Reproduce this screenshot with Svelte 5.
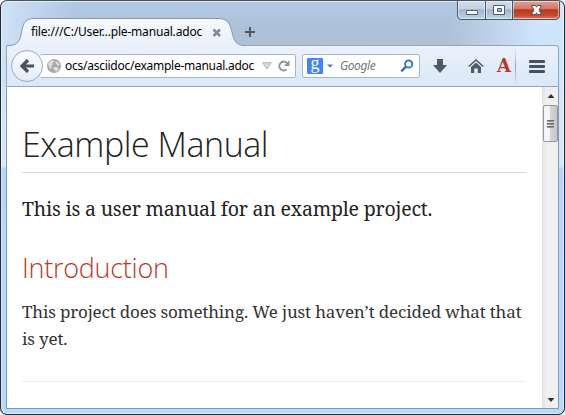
<script>
  const tabTitle = 'file:///C:/User...ple-manual.adoc';
  const address = 'ocs/asciidoc/example-manual.adoc';
</script>

<div class="window">
  <div class="controls">
    <svg width="104" height="20" viewBox="0 0 104 20">
      <defs>
        <linearGradient id="glass" x1="0" y1="0" x2="0" y2="1">
          <stop offset="0" stop-color="#d2deec" /><stop offset=".45" stop-color="#c2d2e4" />
          <stop offset=".5" stop-color="#a0b5cc" /><stop offset="1" stop-color="#c1d5e9" />
        </linearGradient>
        <linearGradient id="red" x1="0" y1="0" x2="0" y2="1">
          <stop offset="0" stop-color="#e4aaa0" /><stop offset=".45" stop-color="#d27564" />
          <stop offset=".5" stop-color="#b83a22" /><stop offset=".8" stop-color="#c44b30" /><stop offset="1" stop-color="#e18b6c" />
        </linearGradient>
      </defs>
      <path d="M.5 0V15Q.5 19.5 5 19.5H55.5V0Z" fill="url(#glass)" />
      <path d="M55.5 0V19.5H98Q102.500 19.5 102.500 15V0Z" fill="url(#red)" />
      <path d="M1.500 1.500V15Q1.500 18.500 5 18.500H27.500V1.500ZM29.500 1.500H54.500V18.500H29.500ZM56.500 1.500H101.500V15Q101.500 18.500 98 18.500H56.500Z" fill="none" stroke="#fff" stroke-opacity=".5" />
      <path d="M.5 0V15Q.5 19.500 5 19.500H98Q102.500 19.500 102.500 15V0M28.500 1V19M55.500 1V19M0 .5H103" fill="none" stroke="#475468" />
      <rect x="9.500" y="10.500" width="11" height="4" rx=".5" fill="#fff" stroke="#535968" />
      <path d="M36.500 5.500H47.500V14.500H36.500ZM40.500 8.500V11.500H44.500V8.500Z" fill="#fff" fill-rule="evenodd" stroke="#535968" />
      <path d="M74.500 5.500H78.500L79.500 7.200 80.500 5.500H84.500L82 10 84.500 14.500H80.500L79.500 12.800 78.500 14.500H74.500L77 10Z" fill="#fff" stroke="#5b5360" stroke-linejoin="round" />
    </svg>
  </div>

  <header>
    <div class="tabstrip">
      <svg class="tab-shape" width="238" height="29" viewBox="0 0 238 29">
        <defs><linearGradient id="tab" x1="0" y1="0" x2="0" y2="1"><stop offset="0" stop-color="#f6f9fd" /><stop offset="1" stop-color="#eaf1fb" /></linearGradient></defs>
        <path d="M1 29V27.500C10 27.500 13 25 15 17C17 6 18 .5 28 .5H212C222 .5 224 6 226 14C228 23 230 27.500 239 27.500V29Z" fill="url(#tab)" />
        <path d="M1 27.500C10 27.500 13 25 15 17C17 6 18 .5 28 .5H212C222 .5 224 6 226 14C228 23 230 27.500 239 27.500" fill="none" stroke="#8399b0" />
      </svg>
      <span class="tab-title">{tabTitle}</span>
      <svg class="tab-close" width="10" height="10" viewBox="0 0 10 10"><path d="M1.500 1.500L8 8M8 1.500L1.500 8" stroke="#7d8c9b" stroke-width="2.600" /></svg>
      <svg class="new-tab" width="12" height="12" viewBox="0 0 12 12"><path d="M6 1V11M1 6H11" stroke="#4b5867" stroke-width="2" /></svg>
    </div>

    <div class="toolbar">
      <div class="location">
        <svg class="globe" width="14" height="14" viewBox="0 0 14 14">
          <circle cx="7" cy="7" r="7" fill="#a8a8a8" />
          <path d="M1 5L3 2 6 1 7 3 5 4 6 6 4 7 5 9 3 10ZM8 2L11 3 13 6 11 7 9 5ZM7 8L10 8 12 10 9 13 8 11 6 10Z" fill="#dcdcdc" />
        </svg>
        <span class="address">{address}</span>
        <svg class="drop" width="10" height="8" viewBox="0 0 10 8"><path d="M.7.7H9.300L5 7Z" fill="#d5dadf" stroke="#b0b8c0" /></svg>
        <svg class="reload" width="12" height="12" viewBox="0 0 12 12"><path d="M8.500 9.500A4.400 4.400 0 1 1 9 3" fill="none" stroke="#8995a3" stroke-width="2" /><path d="M11.500 0V6H5.800Z" fill="#8995a3" /></svg>
      </div>
      <div class="search">
        <span class="google">g</span>
        <svg class="caret" width="6" height="4" viewBox="0 0 6 4"><path d="M0 .5H6L3 3.700Z" fill="#707780" /></svg>
        <span class="hint">Google</span>
        <svg class="glass" width="14" height="14" viewBox="0 0 14 14"><circle cx="8.700" cy="5" r="3.600" fill="none" stroke="#397db7" stroke-width="2" /><path d="M6 7.700L1.300 12.300" stroke="#306fa9" stroke-width="2.400" /></svg>
      </div>
      <svg class="download" width="14" height="14" viewBox="0 0 14 14"><path d="M4 0H10V6H14L7 14 0 6H4Z" fill="#4e5a68" /></svg>
      <svg class="home" width="16" height="14" viewBox="0 0 16 14"><path d="M.7 7.500L8 1 15.300 7.500" fill="none" stroke="#4e5a68" stroke-width="1.500" /><path d="M3 8L8 3.500 13 8V14H9.800V9.500H6.200V14H3Z" fill="#4e5a68" /></svg>
      <span class="addon">A</span>
      <span class="divider"></span>
      <svg class="menu" width="16" height="13" viewBox="0 0 16 13"><path d="M1 1.500H15M1 6.500H15M1 11.500H15" stroke="#47515f" stroke-width="2.800" stroke-linecap="round" /></svg>
      <div class="back">
        <svg width="15" height="14" viewBox="0 0 15 14"><path d="M8 1L2 7 8 13M2.500 7H14" fill="none" stroke="#47525e" stroke-width="3.200" /></svg>
      </div>
    </div>
  </header>

  <div class="viewport">
    <main>
      <h1>Example Manual</h1>
      <p class="lead">This is a user manual for an example project.</p>
      <h2>Introduction</h2>
      <p class="body">This project does something. We just haven’t decided what that<br />is yet.</p>
      <hr />
    </main>
    <aside>
      <svg width="8" height="4" viewBox="0 0 8 4"><path d="M.5 4L4 0 7.500 4Z" fill="#333" /></svg>
      <div class="thumb"><i></i><i></i><i></i></div>
      <svg class="down" width="8" height="4" viewBox="0 0 8 4"><path d="M.5 0H7.500L4 4Z" fill="#333" /></svg>
    </aside>
  </div>
</div>

<style>
  :global(body) { margin: 0; background: #fff; }
  .window {
    position: relative; box-sizing: border-box; width: 565px; height: 415px; padding: 0 6px 6px 5px;
    border: 1px solid #25282f; border-top-color: #4c535f; border-radius: 7px;
    background:
      linear-gradient(90deg, #cee2f8 0, rgba(206,226,248,0) 75px, rgba(206,226,248,0) 450px, #cee4fb 535px) 0 0 / 100% 86px no-repeat,
      linear-gradient(#b1c9e4 0, #adc1d7 30px, #b1c3d7 86px) 0 0 / 100% 86px no-repeat,
      linear-gradient(#cfe1f7 0, #d8e8fa 166px, #b5d6f8 167px, #b8dafa 100%);
    box-shadow: inset 0 0 0 1px rgba(235,247,255,.7);
    overflow: hidden;
  }
  .controls { position: absolute; left: 456px; top: -1px; height: 20px; }
  svg { display: block; flex: none; }
  header { height: 86px; box-sizing: border-box; padding-top: 17px; }
  .tabstrip { position: relative; height: 27px; display: flex; align-items: center; box-sizing: border-box; padding: 0 0 0 25px; }
  .tab-shape { position: absolute; left: 0; top: 0; z-index: 1; overflow: visible; }
  .tab-title { position: relative; z-index: 2; width: 181px; font: 12px/16px "Noto Sans", sans-serif; letter-spacing: -.18px; white-space: nowrap; color: #000; }
  .tab-close { position: relative; z-index: 2; top: 1px; }
  .new-tab { margin-left: 22px; }
  .toolbar {
    position: relative; box-sizing: border-box; height: 42px; width: 553px; padding: 8px 12px 8px 33px; display: flex; align-items: center;
    border: 1px solid #8da7c1; border-radius: 1px 3px 0 0; background: linear-gradient(#eaf1fb, #dae8f8);
  }
  .location, .search { box-sizing: border-box; height: 24px; border: 1px solid #a9b8c9; border-radius: 2px; background: #fff; display: flex; align-items: center; }
  .location { width: 256px; padding-left: 7px; border-left: 0; }
  .address { width: 197px; margin-left: 4px; font: 12px/18px "Noto Sans", sans-serif; letter-spacing: -.26px; color: #000; white-space: nowrap; }
  .reload { margin-left: 6px; }
  .search { width: 118px; margin-left: 6px; padding-left: 4px; }
  .google { width: 16px; height: 16px; border-radius: 1px; background: #4384f3; color: #fff; font: 18px/11px "Liberation Serif", serif; text-align: center; }
  .caret { margin-left: 4px; }
  .hint { width: 60px; margin-left: 7px; font: italic 12px/18px "Noto Sans", sans-serif; letter-spacing: -.4px; color: #777; }
  .download { margin-left: 13px; }
  .home { margin-left: 21px; }
  .addon { width: 18px; margin-left: 13px; color: #bd3423; font: bold 18px/22px "DejaVu Serif", serif; }
  .divider { width: 1px; height: 37px; background: linear-gradient(rgba(145,166,188,0), #8fa4bb, rgba(145,166,188,0)); }
  .menu { margin-left: 13px; }
  .back { position: absolute; left: 4px; top: 4px; box-sizing: border-box; width: 32px; height: 32px; border: 1px solid #9babc0; border-radius: 50%; background: linear-gradient(#fafcff, #e2edf9); display: grid; place-items: center; }
  .viewport { display: flex; height: 321px; box-sizing: content-box; width: 551px; border: solid #799bbd; border-width: 0 1px 1px; background: #fff; }
  main { flex: 1; box-sizing: border-box; padding: 31px 16px 0 15px; min-width: 0; white-space: nowrap; }
  h1, h2, p, hr { margin: 0; }
  h1 { height: 55px; box-sizing: border-box; border-bottom: 1px solid #d9d9d9; font: 300 34px/53px "Open Sans", sans-serif; letter-spacing: -.45px; color: #222; }
  .lead { margin-top: 21px; font: 19.500px/30px "Noto Serif", "DejaVu Serif Condensed", serif; letter-spacing: -.195px; color: #222; }
  h2 { margin-top: 26px; font: 300 27px/36px "Open Sans", sans-serif; letter-spacing: -.27px; color: #ba3925; }
  .body { margin-top: 12px; font: 17px/27px "Noto Serif", "DejaVu Serif Condensed", serif; letter-spacing: -.165px; color: #333; }
  hr { margin-top: 29px; border: 0; border-top: 1px solid #ededed; }
  aside { box-sizing: border-box; width: 16px; padding: 7px 0 6px 1px; background: linear-gradient(90deg, #e3e3e3, #f0f0f0 5px); display: flex; flex-direction: column; align-items: center; }
  .thumb { box-sizing: border-box; width: 15px; height: 37px; margin-top: 7px; border: 1px solid #979797; border-radius: 2px; background: linear-gradient(90deg, #f5f5f5 45%, #d5d5d8 50%, #c5c6cb); display: flex; flex-direction: column; align-items: center; justify-content: center; gap: 1px; }
  .thumb i { width: 7px; height: 2px; background: linear-gradient(#555, #aaa); }
  .down { margin-top: auto; }
</style>
